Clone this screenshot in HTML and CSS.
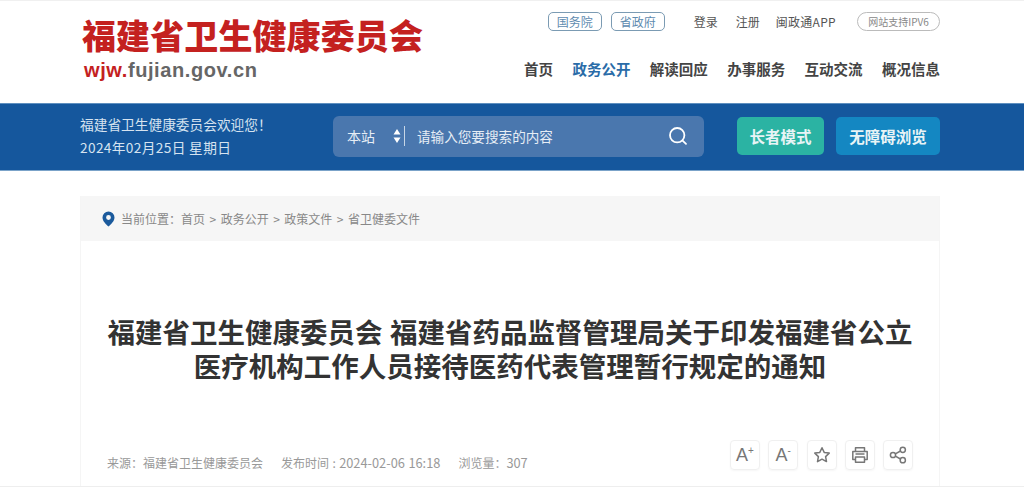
FILE: index.html
```html
<!DOCTYPE html>
<html lang="zh-CN">
<head>
    <meta charset="UTF-8">
    <title>福建省卫生健康委员会</title>
    <link rel="stylesheet" href="styles.css">
</head>
<body>
    <!-- Header -->
    <header class="site-header">
        <div class="wrap header-inner">
            <div class="logo">
                <div class="logo-name">福建省卫生健康委员会</div>
                <div class="logo-url"><span class="red">wjw.</span>fujian.gov.cn</div>
            </div>
            <div class="header-right">
                <div class="top-links">
                    <a class="tag" href="#">国务院</a>
                    <a class="tag tag-second" href="#">省政府</a>
                    <a class="top-link first" href="#">登录</a>
                    <a class="top-link" href="#">注册</a>
                    <a class="top-link last" href="#">闽政通APP</a>
                    <span class="ipv6">网站支持IPV6</span>
                </div>
                <nav class="main-nav">
                    <a href="#">首页</a>
                    <a class="active" href="#">政务公开</a>
                    <a href="#">解读回应</a>
                    <a href="#">办事服务</a>
                    <a href="#">互动交流</a>
                    <a href="#">概况信息</a>
                </nav>
            </div>
        </div>
    </header>

    <!-- Blue band -->
    <section class="band">
        <div class="wrap band-inner">
            <div class="welcome">
                <p>福建省卫生健康委员会欢迎您！</p>
                <p class="today">2024年02月25日 星期日</p>
            </div>
            <div class="search">
                <span class="search-scope">本站</span>
                <svg class="updown" width="8" height="16" viewBox="0 0 8 16"><path d="M4 1l3.5 5.5h-7zM4 15l3.5-5.5h-7z" fill="#fff"/></svg>
                <span class="search-sep"></span>
                <span class="search-text">请输入您要搜索的内容</span>
                <svg class="search-icon" width="20" height="20" viewBox="0 0 20 20" fill="none" stroke="#fff" stroke-width="1.8" stroke-linecap="round"><circle cx="9.2" cy="9.2" r="7.2"/><path d="M14.6 14.6l3.4 3.2"/></svg>
            </div>
            <a class="band-btn green" href="#">长者模式</a>
            <a class="band-btn blue" href="#">无障碍浏览</a>
        </div>
    </section>

    <!-- Article -->
    <main class="wrap article">
        <div class="crumbs">
            <svg width="13" height="16" viewBox="0 0 13 16"><path fill-rule="evenodd" d="M6.5 0.5a6 6 0 0 1 6 6c0 3.6-3.6 7-6 9-2.4-2-6-5.400-6-9a6 6 0 0 1 6-6zm0 3.600a2.400 2.400 0 1 0 0 4.800 2.400 2.400 0 0 0 0-4.800z" fill="#1b5a9c"/></svg>
            <span>当前位置：首页 &gt; 政务公开 &gt; 政策文件 &gt; 省卫健委文件</span>
        </div>
        <h1>福建省卫生健康委员会 福建省药品监督管理局关于印发福建省公立<br>医疗机构工作人员接待医药代表管理暂行规定的通知</h1>
        <div class="meta">
            <div class="meta-text">
                <span>来源：福建省卫生健康委员会</span>
                <span>发布时间 : <span class="num">2024-02-06 16:18</span></span>
                <span>浏览量：<span class="num">307</span></span>
            </div>
            <div class="tools">
                <span class="tool">A<sup>+</sup></span>
                <span class="tool">A<sup>-</sup></span>
                <span class="tool">
                    <svg width="18" height="18" viewBox="0 0 18 18" fill="none" stroke="#777" stroke-width="1.500" stroke-linejoin="round"><path d="M9 1.800l2.200 4.600 5 .7-3.600 3.500.9 5L9 13.200l-4.500 2.400.9-5L1.800 7.100l5-.7z"/></svg>
                </span>
                <span class="tool">
                    <svg width="18" height="18" viewBox="0 0 18 18" fill="none" stroke="#777" stroke-width="1.500" stroke-linejoin="round"><path d="M4.500 5V1.800h9V5M4.500 13.500H1.800V5.500h14.400v8h-2.700"/><path d="M4.500 8h9M4.500 11h9v5.200h-9z"/></svg>
                </span>
                <span class="tool">
                    <svg width="18" height="18" viewBox="0 0 18 18" fill="none" stroke="#777" stroke-width="1.500"><circle cx="4" cy="9" r="2.600"/><circle cx="13.800" cy="3.800" r="2.600"/><circle cx="13.800" cy="14.200" r="2.600"/><path d="M6.300 7.800l5.200-2.800M6.300 10.200l5.200 2.800"/></svg>
                </span>
            </div>
        </div>
    </main>
</body>
</html>
```

FILE: styles.css
```css
/* General */
html, body {
    margin: 0;
    height: 487px;
    overflow: hidden;
}

body {
    display: flex;
    flex-direction: column;
    box-sizing: border-box;
    border-top: 1px solid #f0f0f0;
    border-bottom: 1px solid #eee;
    background: #fff;
    font-family: "Noto Sans CJK SC", "Liberation Sans", sans-serif;
    color: #333;
}

a {
    color: inherit;
    text-decoration: none;
}

p, h1 {
    margin: 0;
}

.wrap {
    width: 860px;
    margin-left: 80px;
}

/* Header */
.site-header {
    height: 102px;
    flex: none;
}

.header-inner {
    display: flex;
    justify-content: space-between;
}

.logo {
    padding: 15px 0 0 2px;
}

.logo-name {
    font-size: 34px;
    line-height: 38px;
    font-weight: 900;
    color: #c4211f;
    letter-spacing: 0.1px;
}

.logo-url {
    margin: 5px 0 0 2px;
    font-family: "Liberation Sans", sans-serif;
    font-size: 20px;
    line-height: 22px;
    font-weight: 700;
    letter-spacing: 0.6px;
    color: #666;
}

.red {
    color: #c4211f;
}

.header-right {
    display: flex;
    flex-direction: column;
    align-items: flex-end;
}

.top-links {
    display: flex;
    align-items: center;
    height: 20px;
    margin-top: 10px;
    font-size: 12px;
    color: #555;
}

.tag {
    width: 54px;
    height: 19px;
    line-height: 17px;
    box-sizing: border-box;
    text-align: center;
    border: 1px solid #7b9bb3;
    border-radius: 5px;
    color: #5f8cb0;
}

.tag-second {
    margin-left: 9px;
}

.top-link {
    margin-left: 18px;
}

.top-link.first {
    margin-left: 29px;
}

.top-link.last {
    margin-left: 16px;
    letter-spacing: 0.3px;
}

.ipv6 {
    width: 83px;
    height: 19px;
    line-height: 17px;
    margin-left: 21px;
    box-sizing: border-box;
    text-align: center;
    border: 1px solid #bbb;
    border-radius: 10px;
    font-size: 10px;
    color: #888;
}

.main-nav {
    display: flex;
    gap: 19.400px;
    margin-top: 20px;
    font-size: 14.500px;
    line-height: 36px;
    font-weight: 700;
    color: #444;
}

.main-nav a.active {
    color: #2a6ca8;
}

/* Blue band */
.band {
    height: 68px;
    flex: none;
    background: #15579d;
    border-top: 1px solid #5e8fbf;
    border-bottom: 1px solid #7ba3c9;
    box-sizing: border-box;
}

.band-inner {
    display: flex;
    align-items: center;
    height: 100%;
    box-sizing: border-box;
    padding-bottom: 2px;
}

.welcome {
    width: 253px;
    font-size: 13.700px;
    line-height: 23px;
    color: #d6e3f0;
}

.today {
    letter-spacing: 0.35px;
}

.search {
    display: flex;
    align-items: center;
    width: 371px;
    height: 41px;
    padding: 0 16px 0 14px;
    box-sizing: border-box;
    background: #4a77ae;
    border-radius: 6px;
    font-size: 13.600px;
    color: #e6edf5;
}

.search-scope {
    width: 46px;
    font-size: 14px;
}

.search-sep {
    width: 1px;
    height: 20px;
    margin: 0 12px 0 3px;
    background: #c7d6e6;
}

.search-text {
    flex: 1;
}

.band-btn {
    height: 38px;
    line-height: 38px;
    text-align: center;
    border-radius: 5px;
    font-size: 15.500px;
    font-weight: 700;
    color: #e8f4f6;
}

.green {
    width: 87px;
    margin-left: 33px;
    background: #2bb3a3;
}

.blue {
    width: 104px;
    margin-left: 12px;
    background: #1487c2;
}

/* Article */
.article {
    flex: 1;
    box-sizing: border-box;
    margin-top: 25px;
    border-left: 1px solid #f5f5f5;
    border-right: 1px solid #f5f5f5;
}

.crumbs {
    display: flex;
    align-items: center;
    gap: 6px;
    height: 45px;
    padding-left: 21px;
    background: #f6f6f6;
    font-size: 12px;
    word-spacing: 1.800px;
    color: #888;
}

h1 {
    margin-top: 76px;
    font-family: "Liberation Sans", "Noto Sans CJK SC", sans-serif;
    font-size: 27.500px;
    line-height: 34px;
    font-weight: 700;
    text-align: center;
    color: #333;
}

.meta {
    display: flex;
    justify-content: space-between;
    align-items: flex-start;
    margin-top: 55px;
    padding: 0 26px;
    font-size: 12px;
    color: #999;
}

.meta-text {
    display: flex;
    gap: 18px;
    margin-top: 14px;
    line-height: 18px;
    word-spacing: 0.700px;
}

.num {
    font-size: 12.800px;
}

.tools {
    display: flex;
    gap: 8.250px;
}

.tool {
    display: flex;
    align-items: center;
    justify-content: center;
    width: 30px;
    height: 30px;
    box-sizing: border-box;
    border: 1px solid #f0f0f0;
    border-radius: 4px;
    box-shadow: 0 1px 2px rgba(0, 0, 0, 0.04);
    font-family: "Liberation Sans", sans-serif;
    font-size: 18px;
    color: #777;
}

.tool sup {
    font-size: 10px;
    line-height: 1;
    margin-bottom: 8px;
}
```
